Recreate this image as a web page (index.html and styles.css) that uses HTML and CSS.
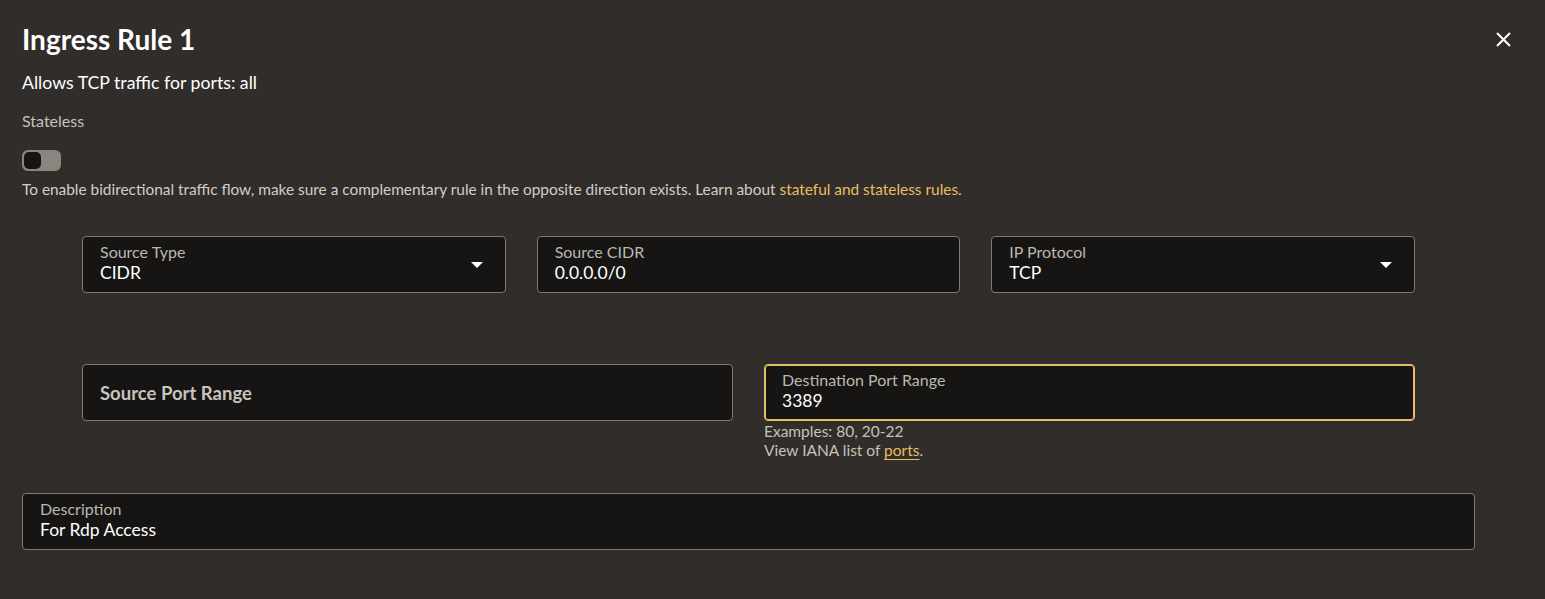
FILE: index.html
```html
<!DOCTYPE html>
<html lang="en">
<head>
    <meta charset="UTF-8">
    <title>Ingress Rule 1</title>
    <link rel="stylesheet" href="styles.css">
</head>
<body>
<div class="panel">
    <div class="header">
        <h1>Ingress Rule 1</h1>
        <button class="close" aria-label="Close">
            <svg width="15" height="15" viewBox="0 0 15 15">
                <path d="M1 1 L14 14 M14 1 L1 14" stroke="#fff" stroke-width="2" fill="none"/>
            </svg>
        </button>
    </div>
    <p class="summary">Allows TCP traffic for ports: all</p>
    <div class="switch-label">Stateless</div>
    <div class="switch"><span class="knob"></span></div>
    <p class="hint">To enable bidirectional traffic flow, make sure a complementary rule in the opposite direction exists. Learn about <a href="#">stateful and stateless rules.</a></p>

    <div class="row three">
        <div class="field select">
            <div class="label">Source Type</div>
            <div class="value">CIDR</div>
            <span class="caret"></span>
        </div>
        <div class="field">
            <div class="label">Source CIDR</div>
            <div class="value">0.0.0.0/0</div>
        </div>
        <div class="field select">
            <div class="label">IP Protocol</div>
            <div class="value">TCP</div>
            <span class="caret"></span>
        </div>
    </div>

    <div class="row two">
        <div class="col">
            <div class="field empty">
                <div class="label">Source Port Range</div>
            </div>
        </div>
        <div class="col">
            <div class="field focused">
                <div class="label">Destination Port Range</div>
                <div class="value">3389</div>
            </div>
            <div class="help">Examples: 80, 20-22</div>
            <div class="help">View IANA list of <a href="#" class="underline">ports</a>.</div>
        </div>
    </div>

    <div class="field wide">
        <div class="label">Description</div>
        <div class="value">For Rdp Access</div>
    </div>
</div>
</body>
</html>
```

FILE: styles.css
```css
body {
    margin: 0;
    background: #312d2a;
    color: #fff;
    font-family: 'Lato', 'Noto Sans', sans-serif;
    -webkit-font-smoothing: antialiased;
}

.panel {
    padding: 19px 22px 40px 22px;
}

.header {
    display: flex;
    justify-content: space-between;
    align-items: center;
    height: 40px;
}

h1 {
    margin: 0;
    font-size: 28px;
    line-height: 40px;
    font-weight: 700;
}

.close {
    background: none;
    border: none;
    padding: 0;
    margin-right: 12px;
    width: 15px;
    height: 15px;
    cursor: pointer;
}

.close svg {
    display: block;
}

.summary {
    margin: 12px 0 0 0;
    font-size: 17.7px;
    line-height: 24px;
}

.switch-label {
    margin-top: 16px;
    font-size: 16px;
    line-height: 20px;
    color: #c7c1ba;
}

.switch {
    margin-top: 19px;
    width: 39px;
    height: 21px;
    border-radius: 6px;
    background: #8c857e;
    box-sizing: border-box;
    padding: 2px;
}

.knob {
    display: block;
    width: 17px;
    height: 17px;
    border-radius: 5px;
    background: #161513;
}

.hint {
    margin: 8px 0 0 0;
    font-size: 15.4px;
    line-height: 20px;
    color: #d3cdc6;
}

a {
    color: #e6be62;
    text-decoration: none;
}

a.underline {
    text-decoration: underline;
    text-underline-offset: 3px;
}

.row {
    display: grid;
    gap: 31px;
    width: 1333px;
    margin-left: 60px;
}

.row.three {
    grid-template-columns: repeat(3, 1fr);
    margin-top: 37px;
}

.row.two {
    grid-template-columns: repeat(2, 1fr);
    margin-top: 71px;
}

.field {
    position: relative;
    box-sizing: border-box;
    height: 57px;
    background: #161513;
    border: 1px solid #7f7a74;
    border-radius: 4px;
    padding: 5px 17px 0 17px;
}

.label {
    font-size: 16px;
    line-height: 20px;
    color: #bdb7b0;
}

.value {
    font-size: 17.5px;
    line-height: 22px;
    color: #fff;
}

.field.empty {
    display: flex;
    align-items: center;
    padding-top: 0;
}

.field.empty .label {
    font-size: 18.5px;
    font-weight: 700;
    color: #c9c3bc;
}

.field.focused {
    border-color: #e6be62;
    box-shadow: inset 0 0 0 1px #e6be62;
}

.caret {
    position: absolute;
    right: 22px;
    top: 25px;
    width: 0;
    height: 0;
    border-left: 6px solid transparent;
    border-right: 6px solid transparent;
    border-top: 6px solid #fff;
}

.help {
    font-size: 15.5px;
    line-height: 19px;
    color: #c7c1ba;
}

.col .field + .help {
    margin-top: 1px;
}

.field.wide {
    margin-top: 33px;
    width: 1453px;
}
```
